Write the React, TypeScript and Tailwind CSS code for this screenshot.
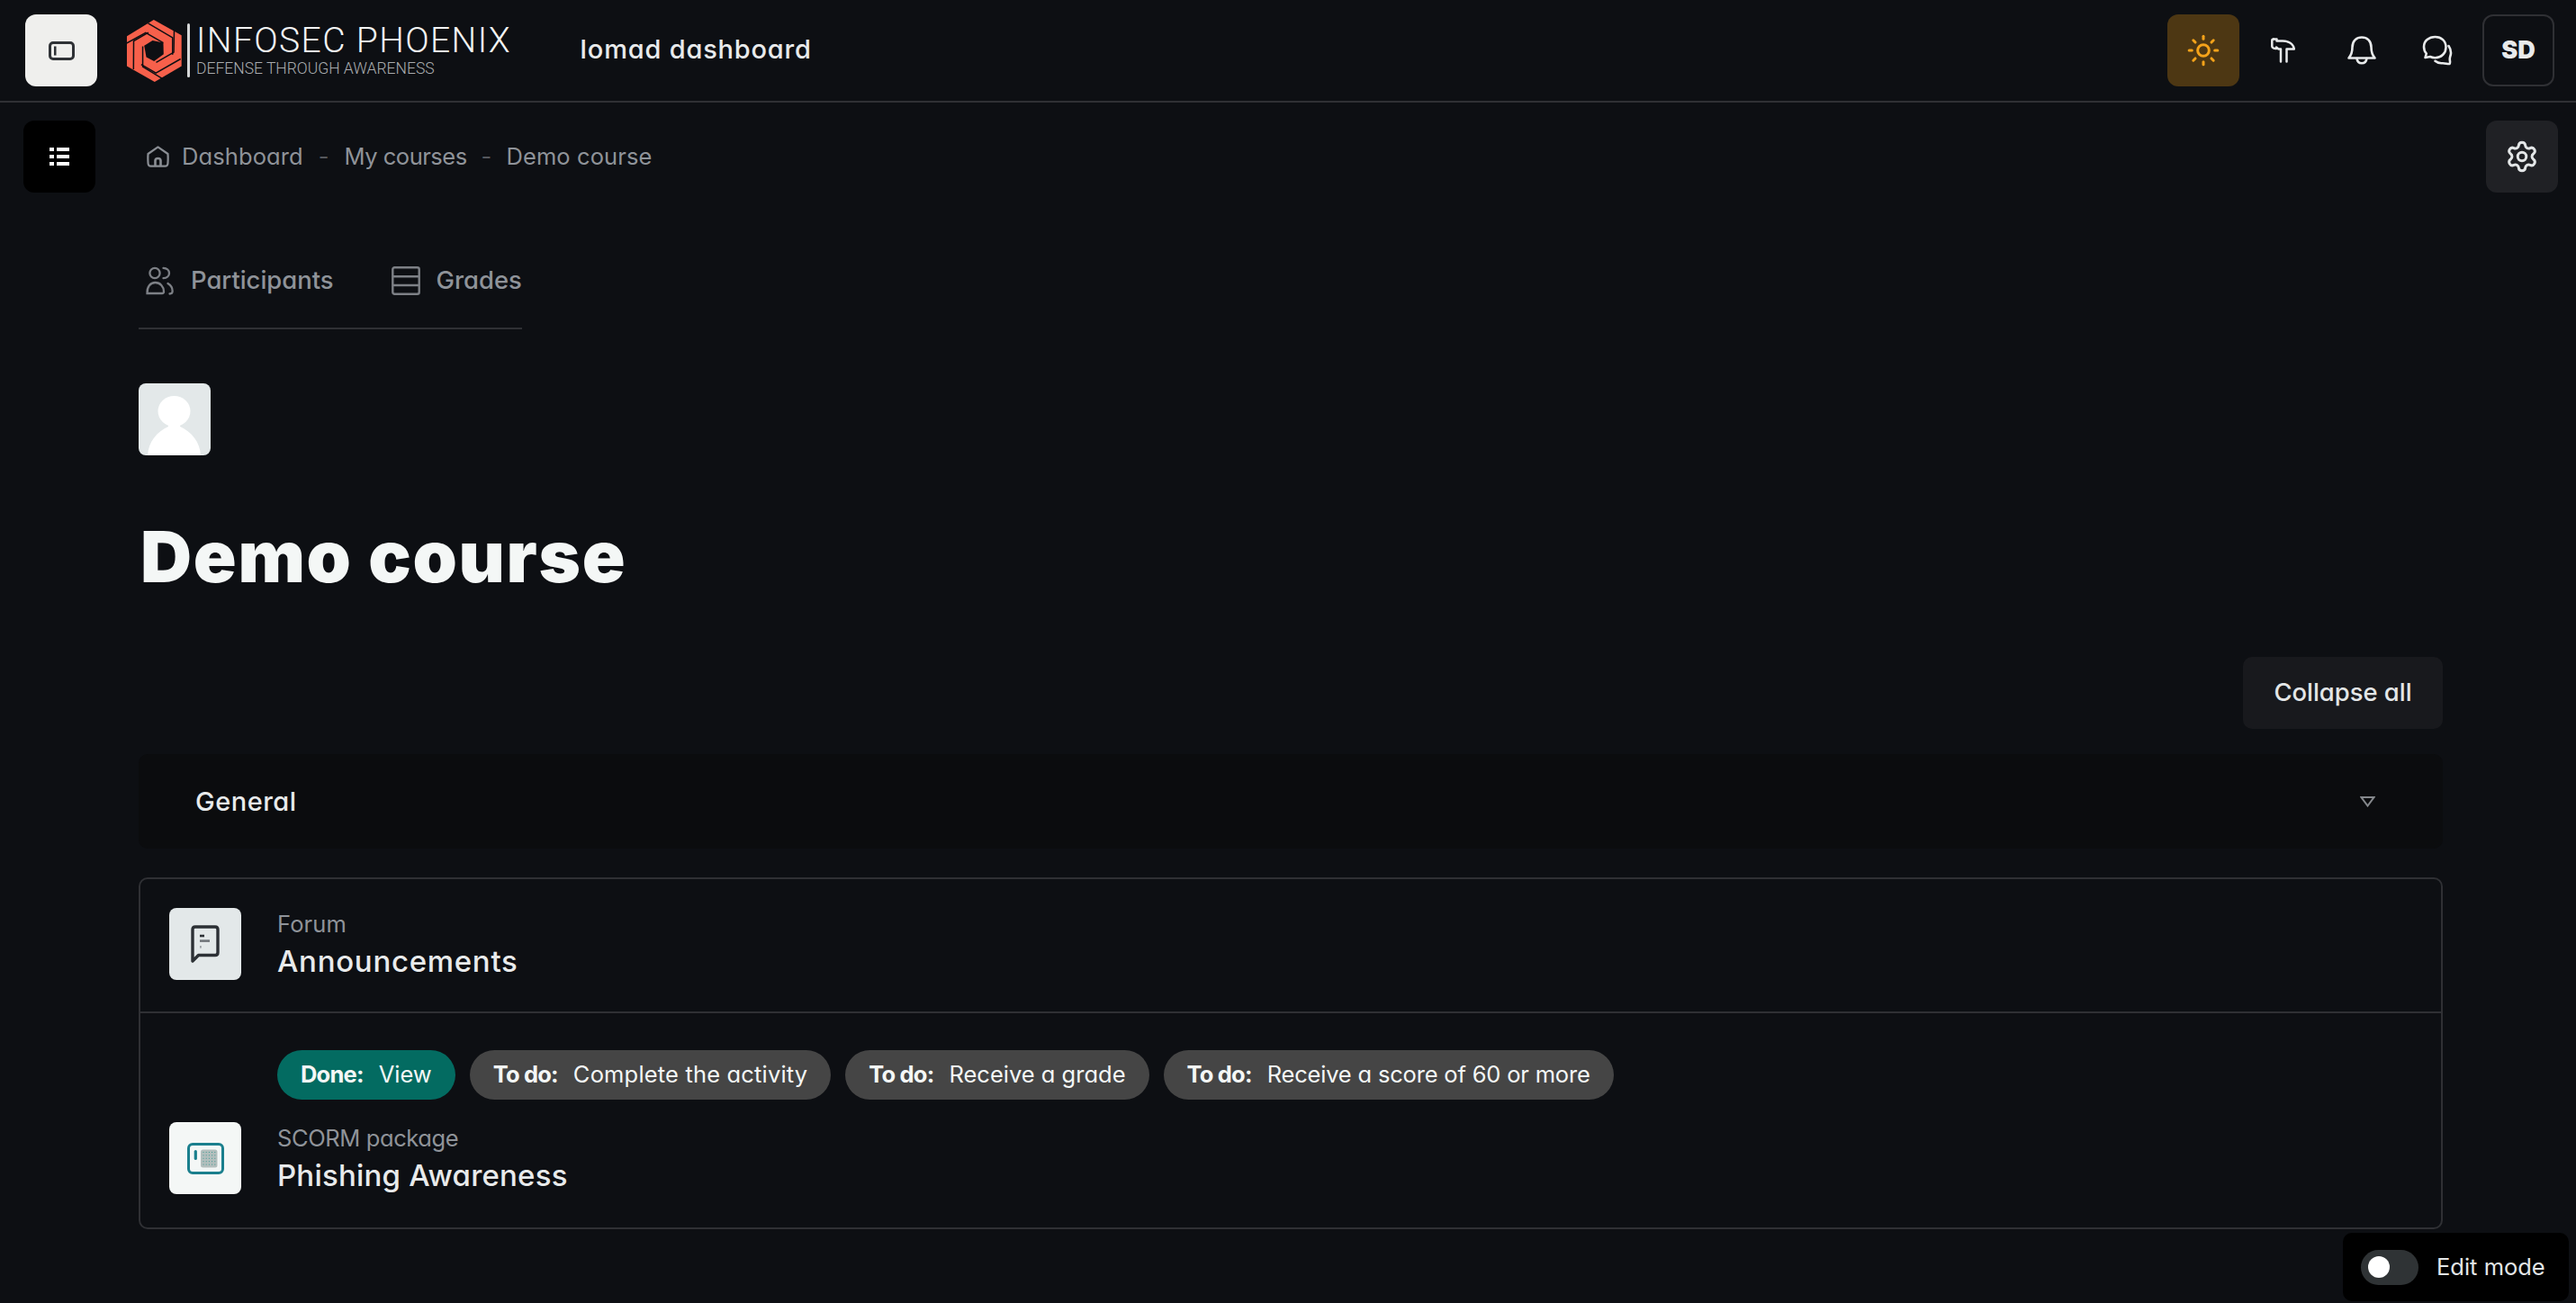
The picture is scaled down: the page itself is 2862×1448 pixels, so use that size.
import React from "react";
import { Settings, Sun } from "lucide-react";

const inter = "font-['Inter',sans-serif] [font-feature-settings:'cv11']";

function Logo() {
  const arm = (
    <>
      <path d="M28 105 L95 68 L154 102" />
      <path d="M103 37 L185 85 L185 142" />
    </>
  );
  return (
    <svg viewBox="30 22 188 214" className="h-[71px] w-[63px] shrink-0" aria-hidden="true">
      <path d="M122 25 L215 77 L215 180 L125 233 L32 180 L32 80 Z" fill="#f7604b" />
      <path d="M154 102 L155 140 L123 164 L97 150 L90 112 L118 94 Z" fill="#0d0f13" />
      <g fill="none" stroke="#0d0f13" strokeWidth="4.5">
        {arm}
        <g transform="rotate(120 123 128)">{arm}</g>
        <g transform="rotate(240 123 128)">{arm}</g>
      </g>
    </svg>
  );
}

function SidebarIcon() {
  return (
    <svg viewBox="0 0 29 21" className="h-[21px] w-[29px]" fill="none" aria-hidden="true">
      <rect x="1.5" y="1.5" width="26" height="18" rx="3.5" stroke="#2f3236" strokeWidth="3" />
      <rect x="6" y="5.5" width="2.5" height="10" fill="#2f3236" />
    </svg>
  );
}

function ListIcon() {
  return (
    <svg viewBox="0 0 22 20" className="h-5 w-[22px]" fill="#fff" aria-hidden="true">
      <rect x="0" y="0" width="5" height="4" />
      <rect x="8" y="0" width="14" height="4" />
      <rect x="0" y="8" width="5" height="4" />
      <rect x="8" y="8" width="14" height="4" />
      <rect x="0" y="16" width="5" height="4" />
      <rect x="8" y="16" width="14" height="4" />
    </svg>
  );
}

function HammerIcon() {
  return (
    <svg viewBox="0 0 27 28" className="h-[28px] w-[27px]" fill="none" stroke="#e8eaeb" strokeWidth="2.5" strokeLinejoin="round" strokeLinecap="round" aria-hidden="true">
      <path d="M3 1.5 H6.5 V3.6 H13 C19.5 3.6 25 6.5 25.8 12.5 H17.5 V26.5" />
      <path d="M11 26.5 V12.5 H8.5 L6 10.6 V12 C4 12.5 1.3 11 1.3 9.5 V3 C1.3 2 2 1.5 3 1.5" />
    </svg>
  );
}

function BellIcon() {
  return (
    <svg viewBox="0 0 32 32" className="h-8 w-8" fill="none" stroke="#e8eaeb" strokeWidth="2.6" strokeLinejoin="round" strokeLinecap="round" aria-hidden="true">
      <path d="M1.5 24.5 C4.5 21 5.5 17.5 5.5 12.5 C5.5 5.5 10 1.5 16 1.5 C22 1.5 26.5 5.5 26.5 12.5 C26.5 17.5 27.5 21 30.5 24.5 Z" />
      <path d="M10.5 25 C11 28.5 13 30.3 16 30.3 C19 30.3 21 28.5 21.5 25" />
    </svg>
  );
}

function ChatIcon() {
  return (
    <svg viewBox="0 0 34 34" className="h-[34px] w-[34px]" fill="none" stroke="#e8eaeb" strokeWidth="2.6" strokeLinejoin="round" strokeLinecap="round" aria-hidden="true">
      <path d="M14.5 2 C7.5 2 2 6.5 2 13 C2 16 3 18.5 4.8 20.5 L3.5 25 L9 24 C11 25 12.5 25.2 14.5 25.2 C21.5 25.2 26.5 20 26.5 13.5 C26.5 6.5 21.5 2 14.5 2 Z" />
      <path d="M29.5 12 C31.5 15 32.5 18 31.8 21.5 C31.5 23.5 30.5 25 30.8 27.5 C31 29.5 31.5 31.5 30.5 32 C28.5 32.5 26 31 22.5 31.2 C19 31.5 16.5 30.5 14.5 28.8" />
    </svg>
  );
}

function HomeIcon() {
  return (
    <svg viewBox="0 0 25 24" className="h-6 w-[25px]" fill="none" stroke="#8a8e94" strokeWidth="2.2" strokeLinejoin="round" aria-hidden="true">
      <path d="M12.5 1.3 L23.5 9 C23.7 12 23.8 15.5 23.4 20 C23.2 21.8 22.2 22.7 20.5 22.7 H4.5 C2.8 22.7 1.8 21.8 1.6 20 C1.2 15.5 1.3 12 1.5 9 Z" />
      <path d="M9.5 22.5 V16.5 C9.5 15 10.8 14 12.5 14 C14.2 14 15.5 15 15.5 16.5 V22.5" strokeWidth="2.6" />
    </svg>
  );
}

function ParticipantsIcon() {
  return (
    <svg viewBox="0 0 31 32" className="h-8 w-[31px]" fill="none" stroke="#7d8086" strokeWidth="2.3" strokeLinecap="round" aria-hidden="true">
      <circle cx="10" cy="7.5" r="5.6" />
      <path d="M19.5 1.8 C23.5 2 26 4.5 26 7.5 C26 10.5 23.5 13 19.5 13.2" />
      <path d="M1.5 30 C1.2 22.5 5 18 10.5 18 C16 18 20 22.5 20 28 C20 29.5 19.3 30 18 30 Z" />
      <path d="M24.5 19 C28 21 29.8 24.5 29.6 28 C29.5 29.5 28.5 30.5 26.5 30.5" />
    </svg>
  );
}

function GradesIcon() {
  return (
    <svg viewBox="0 0 32 32" className="h-8 w-8" fill="none" stroke="#7d8086" strokeWidth="2.4" aria-hidden="true">
      <rect x="1.3" y="1.3" width="29.4" height="29.4" rx="2" />
      <path d="M1.3 11.3 H30.7 M1.3 21 H30.7" />
    </svg>
  );
}

function ForumIcon() {
  return (
    <svg viewBox="0 0 32 42" className="h-[42px] w-8" fill="none" aria-hidden="true">
      <path d="M2 40 V5 C2 3 3 2 5 2 H27 C29 2 30 3 30 5 V30.5 C30 32.5 29 33.5 27 33.5 H8.5 L2 40 Z" stroke="#2c3035" strokeWidth="3.4" strokeLinejoin="round" />
      <rect x="10" y="10.7" width="5" height="2.6" fill="#2c3035" />
      <rect x="10" y="16.3" width="11" height="2.6" fill="#70757a" />
      <rect x="10" y="23" width="1.8" height="2.6" fill="#9da2a6" />
    </svg>
  );
}

function ScormIcon() {
  const dots: React.ReactNode[] = [];
  for (let r = 0; r < 5; r++) {
    for (let c = 0; c < 5; c++) {
      dots.push(<rect key={`${r}-${c}`} x={17.5 + c * 3.2} y={10 + r * 3.4} width="1" height="1" fill="#3f9a94" />);
    }
  }
  return (
    <svg viewBox="0 0 41 35" className="h-[35px] w-[41px]" fill="none" aria-hidden="true">
      <rect x="1.5" y="1.5" width="38" height="32" rx="4.5" stroke="#1a7f8d" strokeWidth="3" />
      <rect x="7.7" y="8" width="3.2" height="11" rx="1.6" fill="#1a7f8d" />
      <rect x="15" y="7.5" width="18.5" height="20" rx="2.5" fill="#b3bfbd" />
      {dots}
    </svg>
  );
}

function Avatar() {
  return (
    <div className="h-20 w-20 overflow-hidden rounded-lg bg-[#e3e8e9]">
      <svg viewBox="0 0 80 80" className="h-20 w-20" fill="#fff" aria-hidden="true">
        <ellipse cx="39.5" cy="31" rx="18" ry="17" />
        <path d="M33 42 H46 V50 H33 Z" />
        <path d="M10 80 C11 65 20 54 33 48 L46 48 C59 54 68 65 69 80 Z" />
      </svg>
    </div>
  );
}

function Pill({ label, text, done, tracking }: { label: string; text: string; done?: boolean; tracking: string }) {
  return (
    <div className={`flex h-[55px] items-center gap-[17px] rounded-full px-[26px] text-[25.5px] text-[#f4f7f6] ${done ? "bg-[#036b61]" : "bg-[#454545]"}`}>
      <span className="font-bold tracking-[-0.8px]">{label}</span>
      <span className={tracking}>{text}</span>
    </div>
  );
}

export default function App() {
  return (
    <div className={`relative h-screen overflow-hidden bg-[#0d0f13] ${inter}`}>
      <header className="flex h-[114px] items-center border-b-2 border-[#2f3034] pl-[28px] pr-[24px]">
        <div className="flex h-20 w-20 items-center justify-center rounded-xl bg-[#efefed]">
          <SidebarIcon />
        </div>
        <div className="ml-8 flex items-center">
          <Logo />
          <div className="ml-[5px] h-[60px] w-[3px] rounded-sm bg-[#d5d7d8]" />
          <div className="ml-[7px] flex flex-col font-['Roboto',sans-serif] font-light">
            <span className="text-[39px] leading-[39px] tracking-[1.4px] text-[#f2f3f3]">INFOSEC PHOENIX</span>
            <span className="mt-[1px] text-[17.5px] leading-[20px] tracking-[0px] text-[#a9acaf]">DEFENSE THROUGH AWARENESS</span>
          </div>
        </div>
        <div className="mb-[2px] ml-[76px] text-[29px] font-medium tracking-[0.8px] text-[#e8eaeb]">Iomad dashboard</div>
        <div className="ml-auto flex items-center">
          <div className="flex h-20 w-20 items-center justify-center rounded-xl bg-[#4d3713]">
            <Sun size={38} color="#f5a31a" strokeWidth={1.9} />
          </div>
          <div className="flex h-20 w-24 items-center justify-center"><HammerIcon /></div>
          <div className="flex h-20 w-20 items-center justify-center"><BellIcon /></div>
          <div className="flex h-20 w-[88px] items-center justify-center"><ChatIcon /></div>
          <div className="ml-[6px] flex h-20 w-20 items-center justify-center rounded-xl border-2 border-[#2f3034] text-[27px] font-black text-[#e8eaeb]">SD</div>
        </div>
      </header>

      <div className="mt-5 flex items-center pl-[26px] pr-5">
        <div className="flex h-20 w-20 items-center justify-center rounded-xl bg-black">
          <ListIcon />
        </div>
        <nav className="ml-[57px] flex items-center text-[25.5px] tracking-[0.1px] text-[#8f9399]">
          <HomeIcon />
          <span className="ml-[14px]">Dashboard</span>
          <span className="ml-[17px] text-[#55585d]">-</span>
          <span className="ml-[17px] tracking-[-0.5px]">My courses</span>
          <span className="ml-4 text-[#55585d]">-</span>
          <span className="ml-4">Demo course</span>
        </nav>
        <div className="ml-auto flex h-20 w-20 items-center justify-center rounded-xl bg-[#202125]">
          <Settings size={38} color="#e3e6e7" strokeWidth={1.9} />
        </div>
      </div>

      <main className="pl-[154px] pr-[148px]">
        <div className="mt-[74px] flex h-[78px] w-[426px] items-start border-b-2 border-[#2f3034] pl-2 text-[27.4px] font-medium text-[#8f9399]">
          <div className="flex h-12 items-center gap-[19px]">
            <ParticipantsIcon />
            <span>Participants</span>
          </div>
          <div className="ml-[64px] flex h-12 items-center gap-[18px]">
            <GradesIcon />
            <span>Grades</span>
          </div>
        </div>

        <div className="mt-[60px]">
          <Avatar />
        </div>

        <h1 className="ml-[2px] mt-[62px] text-[79px] font-black leading-[100px] tracking-[1.7px] text-[#f4f7f6]">Demo course</h1>

        <div className="mt-[62px] flex justify-end">
          <div className="flex h-20 w-[222px] items-center justify-center rounded-[10px] bg-[#18191d] text-[27.4px] font-medium text-[#e3e6e7]">Collapse all</div>
        </div>

        <div className="mt-7 flex h-[105px] items-center justify-between rounded-[10px] bg-[#0b0c0e] pl-[63px] pr-[75px]">
          <span className="text-[29px] font-medium tracking-[0.5px] text-[#e8eaeb]">General</span>
          <svg viewBox="0 0 17 12" className="h-3 w-[17px]" fill="none" stroke="#85888c" strokeWidth="2" aria-hidden="true">
            <path d="M1.5 1 H15.5 L8.5 10.5 Z" />
          </svg>
        </div>

        <div className="mt-8 rounded-[10px] border-2 border-[#2f3034]">
          <div className="flex h-[149px] items-start border-b-2 border-[#2f3034] pl-8 pt-8">
            <div className="flex h-20 w-20 shrink-0 items-center justify-center rounded-lg bg-[#e3e8e9]">
              <ForumIcon />
            </div>
            <div className="ml-10">
              <div className="text-[25.5px] leading-[36px] tracking-[0.1px] text-[#8f9399]">Forum</div>
              <div className="text-[33px] font-medium leading-[46px] tracking-[0.7px] text-[#e8eaeb]">Announcements</div>
            </div>
          </div>
          <div className="pb-[35px] pl-8 pt-[41px]">
            <div className="ml-[120px] flex gap-4">
              <Pill label="Done:" text="View" done tracking="" />
              <Pill label="To do:" text="Complete the activity" tracking="tracking-[0.17px]" />
              <Pill label="To do:" text="Receive a grade" tracking="" />
              <Pill label="To do:" text="Receive a score of 60 or more" tracking="tracking-[-0.19px]" />
            </div>
            <div className="mt-[25px] flex items-start">
              <div className="flex h-20 w-20 shrink-0 items-center justify-center rounded-lg bg-[#f4f7f6]">
                <ScormIcon />
              </div>
              <div className="ml-10">
                <div className="text-[25.5px] leading-[36px] tracking-[-0.4px] text-[#8f9399]">SCORM package</div>
                <div className="text-[33px] font-medium leading-[46px] tracking-[0.2px] text-[#e8eaeb]">Phishing Awareness</div>
              </div>
            </div>
          </div>
        </div>
      </main>

      <div className="absolute bottom-[2px] right-2 flex h-[76px] w-[251px] items-center rounded-[10px] bg-black pl-5">
        <div className="flex h-[39px] w-16 items-center rounded-full bg-[#2f3335] pl-2">
          <div className="h-6 w-6 rounded-full bg-white" />
        </div>
        <span className="ml-5 text-[25.5px] text-[#e3e6e7]">Edit mode</span>
      </div>
    </div>
  );
}
